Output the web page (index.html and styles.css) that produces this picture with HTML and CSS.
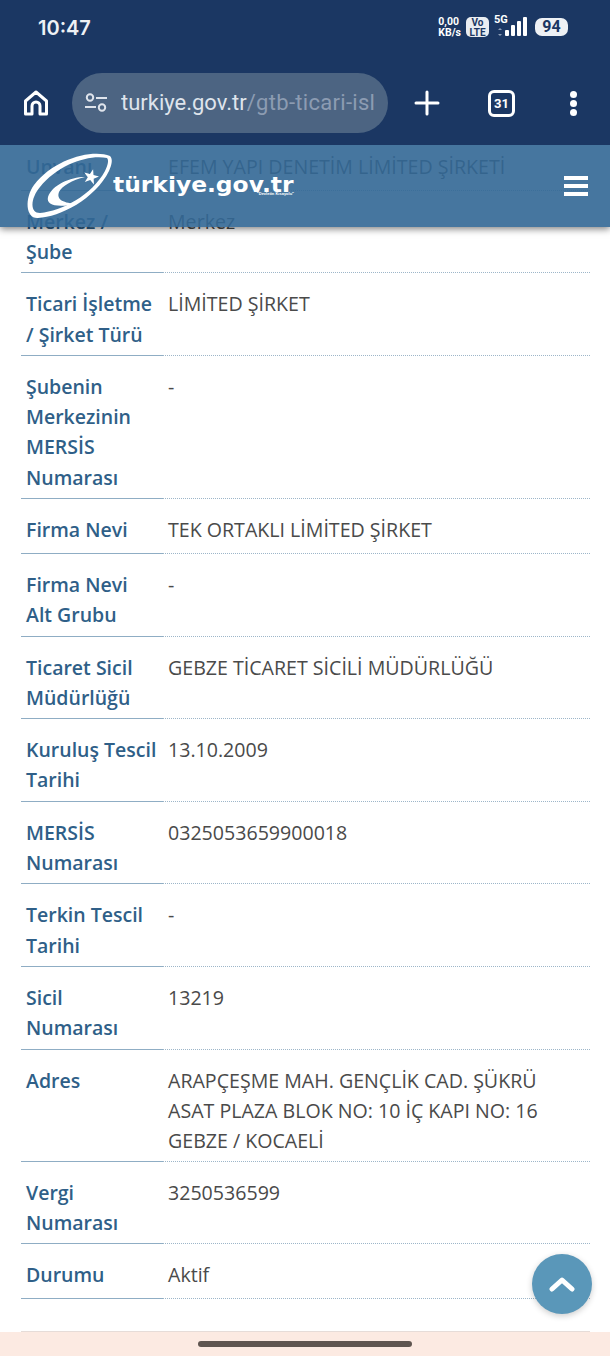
FILE: index.html
```html
<!DOCTYPE html>
<html lang="tr">
<head>
	<meta charset="utf-8">
	<title>türkiye.gov.tr</title>
	<link rel="stylesheet" href="styles.css">
</head>
<body>
<div class="screen">

	<div class="chrome">
		<div class="statusbar">
			<span class="clock">10:47</span>
			<div class="status-icons">
				<span class="netspeed">0,00<br>KB/s</span>
				<span class="volte">Vo<br>LTE</span>
				<div class="signal">
					<span class="five-g">5G</span>
					<svg width="32" height="22" viewBox="0 0 32 22">
						<path d="M4 12l2 2H2zM4 20l2-2H2z" fill="#8fa0b8"/>
						<rect x="9" y="14" width="4" height="6" rx="1" fill="#fff"/>
						<rect x="15" y="9" width="4" height="11" rx="1" fill="#fff"/>
						<rect x="21" y="5" width="4" height="15" rx="1" fill="#fff"/>
						<rect x="27" y="1" width="4" height="19" rx="1" fill="#fff"/>
					</svg>
				</div>
				<span class="battery">94</span>
			</div>
		</div>
		<div class="toolbar">
			<svg class="home-icon" width="26" height="28" viewBox="0 0 26 28" fill="none" stroke="#fff" stroke-width="3">
				<path d="M2.5 25V12L13 3l10.5 9v13H17v-8a4 4 0 0 0-8 0v8z" stroke-linejoin="round"/>
			</svg>
			<div class="urlbar">
				<svg class="tune-icon" width="24" height="20" viewBox="0 0 24 20" fill="none" stroke="#dfe4ec" stroke-width="2">
					<circle cx="6" cy="4.5" r="3.2"/>
					<path d="M12 5h11M1 14h11"/>
					<circle cx="18" cy="14.5" r="3.2"/>
				</svg>
				<span class="url"><span class="url-host">turkiye.gov.tr</span>/gtb-ticari-islem</span>
			</div>
			<svg class="plus-icon" width="26" height="26" viewBox="0 0 26 26" stroke="#fff" stroke-width="3" stroke-linecap="round">
				<path d="M13 2v22M2 13h22"/>
			</svg>
			<span class="tabs">31</span>
			<div class="kebab"><i></i><i></i><i></i></div>
		</div>
	</div>

	<header class="site-header">
		<div class="logo">
			<svg width="100" height="75" viewBox="0 0 100 75" fill="#fff">
				<path fill-rule="evenodd" d="M90 7C72 0 34 10 14 36 4 50 6 70 18 69 40 68 75 50 89 22 92 15 93 10 90 7zM87 9C70 5 38 15 20 38 10 50 10 64 20 64 42 62 72 46 85 22 88 16 89 11 87 9z"/>
				<path d="M65 28C50 28 32 36 28 48 26 56 36 59 57 55 44 54 36 51 39 43 42 37 52 31 65 28z"/>
				<path d="M73.1 20.3L73.5 26 79 27.6 73.7 29.7 73.9 35.5 70.2 31.1 64.8 33 67.8 28.2 64.3 23.6 69.9 25z"/>
			</svg>
			<div class="logo-text">
				<span class="logo-name">türkiye.gov.tr</span>
				<span class="logo-tag">"Devletin Kısayolu"</span>
			</div>
		</div>
		<div class="menu-btn"><i></i><i></i><i></i></div>
	</header>

	<main class="details">
		<div class="row one"><div class="lbl">Unvanı</div><div class="val">EFEM YAPI DENETİM LİMİTED ŞİRKETİ</div></div>
		<div class="row"><div class="lbl">Merkez / Şube</div><div class="val">Merkez</div></div>
		<div class="row"><div class="lbl">Ticari İşletme / Şirket Türü</div><div class="val">LİMİTED ŞİRKET</div></div>
		<div class="row"><div class="lbl">Şubenin Merkezinin MERSİS Numarası</div><div class="val">-</div></div>
		<div class="row one"><div class="lbl">Firma Nevi</div><div class="val">TEK ORTAKLI LİMİTED ŞİRKET</div></div>
		<div class="row"><div class="lbl">Firma Nevi Alt Grubu</div><div class="val">-</div></div>
		<div class="row"><div class="lbl">Ticaret Sicil Müdürlüğü</div><div class="val">GEBZE TİCARET SİCİLİ MÜDÜRLÜĞÜ</div></div>
		<div class="row"><div class="lbl">Kuruluş Tescil Tarihi</div><div class="val">13.10.2009</div></div>
		<div class="row"><div class="lbl">MERSİS Numarası</div><div class="val">0325053659900018</div></div>
		<div class="row"><div class="lbl">Terkin Tescil Tarihi</div><div class="val">-</div></div>
		<div class="row"><div class="lbl">Sicil Numarası</div><div class="val">13219</div></div>
		<div class="row"><div class="lbl">Adres</div><div class="val">ARAPÇEŞME MAH. GENÇLİK CAD. ŞÜKRÜ ASAT PLAZA BLOK NO: 10 İÇ KAPI NO: 16 GEBZE / KOCAELİ</div></div>
		<div class="row"><div class="lbl">Vergi Numarası</div><div class="val">3250536599</div></div>
		<div class="row one"><div class="lbl">Durumu</div><div class="val">Aktif</div></div>
		<div class="end-line"></div>
	</main>

	<button class="to-top" type="button">
		<svg width="26" height="16" viewBox="0 0 26 16" fill="none" stroke="#fff" stroke-width="5" stroke-linecap="round" stroke-linejoin="round">
			<path d="M3 13L13 4l10 9"/>
		</svg>
	</button>

	<div class="navbar"><span class="home-pill"></span></div>
</div>
</body>
</html>
```

FILE: styles.css
```css
* {
	box-sizing: border-box;
}

html, body {
	margin: 0;
	padding: 0;
}

body {
	background: #fff;
	font-family: "Open Sans", sans-serif;
}

.screen {
	position: relative;
	width: 610px;
	height: 1356px;
	overflow: hidden;
	display: flex;
	flex-direction: column;
}

/* browser chrome */
.chrome {
	position: relative;
	z-index: 3;
	flex: none;
	height: 145px;
	background: #1b3763;
	color: #fff;
	font-family: Roboto, sans-serif;
}

.statusbar {
	height: 73px;
	display: flex;
	align-items: flex-start;
	justify-content: space-between;
	padding: 16px 42px 0 38px;
}

.clock {
	font-family: Inter, sans-serif;
	font-size: 20px;
	line-height: 24px;
	font-weight: 600;
	color: #eef1f5;
}

.status-icons {
	display: flex;
	align-items: center;
	height: 24px;
	margin-top: -1px;
}

.netspeed {
	font-size: 10.5px;
	line-height: 11px;
	font-weight: 700;
	margin-right: 5px;
}

.volte {
	width: 23px;
	height: 20px;
	background: #e9edf2;
	border-radius: 5px;
	color: #1b3763;
	font-size: 10px;
	line-height: 9.5px;
	font-weight: 700;
	text-align: center;
	padding-top: 1px;
	margin-right: 3px;
}

.signal {
	position: relative;
	width: 36px;
	height: 22px;
	display: flex;
	justify-content: flex-end;
}

.five-g {
	position: absolute;
	left: 2px;
	top: -2px;
	font-size: 11px;
	line-height: 12px;
	font-weight: 700;
}

.battery {
	width: 33px;
	height: 18px;
	margin-left: 7px;
	background: #eef1f5;
	border-radius: 7px;
	color: #1b3763;
	font-size: 16px;
	line-height: 18px;
	font-weight: 700;
	text-align: center;
}

.toolbar {
	display: flex;
	align-items: center;
	height: 60px;
}

.home-icon {
	flex: none;
	margin: 0 23px 0 23px;
}

.urlbar {
	flex: none;
	width: 316px;
	height: 60px;
	border-radius: 30px;
	background: #4c6482;
	display: flex;
	align-items: center;
	padding: 0 12px 0 12px;
}

.tune-icon {
	flex: none;
	margin-right: 13px;
}

.url {
	font-size: 22px;
	line-height: 30px;
	color: #8c9cb2;
	letter-spacing: 0.3px;
	white-space: nowrap;
	overflow: hidden;
}

.url-host {
	color: #dfe4ec;
	letter-spacing: 0;
}

.plus-icon {
	flex: none;
	margin-left: 26px;
}

.tabs {
	flex: none;
	width: 27px;
	height: 27px;
	margin-left: 48px;
	border: 3px solid #fff;
	border-radius: 6px;
	font-size: 13px;
	line-height: 21px;
	font-weight: 700;
	text-align: center;
}

.kebab {
	flex: none;
	margin-left: 55px;
	display: flex;
	flex-direction: column;
	gap: 2px;
}

.kebab i {
	display: block;
	width: 7px;
	height: 7px;
	border-radius: 50%;
	background: #fff;
}

/* site header, sits on top of the list */
.site-header {
	position: absolute;
	z-index: 2;
	top: 145px;
	left: 0;
	width: 610px;
	height: 82px;
	background: rgba(50, 103, 149, 0.9);
	box-shadow: 0 2px 7px rgba(0, 0, 0, 0.5);
	display: flex;
	align-items: center;
	justify-content: space-between;
	padding: 0 22px 0 20px;
}

.logo {
	display: flex;
	align-items: flex-start;
}

.logo-text {
	width: 181px;
	display: flex;
	flex-direction: column;
	align-items: flex-end;
	margin: 25px 0 0 -7px;
	color: #fff;
}

.logo-name {
	align-self: flex-start;
	font-family: "DejaVu Sans", sans-serif;
	font-size: 21px;
	line-height: 22px;
	font-weight: 700;
	white-space: nowrap;
	transform: scaleX(1.113);
	transform-origin: left center;
}

.logo-tag {
	margin-top: -5px;
	font-family: "Liberation Sans", sans-serif;
	font-size: 4px;
	line-height: 6px;
	font-weight: 700;
}

.menu-btn {
	display: flex;
	flex-direction: column;
	gap: 4px;
}

.menu-btn i {
	display: block;
	width: 24px;
	height: 4px;
	background: #fff;
}

/* detail rows */
.details {
	flex: 1;
	min-height: 0;
	margin: -9.4px 20px 0 21px;
}

.row {
	display: grid;
	grid-template-columns: 142px 1fr;
}

.row.one {
	min-height: 55px;
}

.lbl {
	padding: 16px 6px 5px 5px;
	border-bottom: 1px solid #8fadc4;
	color: #2f5f88;
	font-size: 19.5px;
	line-height: 30.3px;
	font-weight: 600;
}

.val {
	padding: 16px 40px 5px 5px;
	border-bottom: 1px dotted #9db6c9;
	color: #4a4a4a;
	font-size: 19.6px;
	line-height: 30px;
}

.end-line {
	margin-top: 31.4px;
	height: 1px;
	background: #e6dcd8;
}

.to-top {
	position: absolute;
	z-index: 1;
	left: 532px;
	top: 1254px;
	width: 60px;
	height: 60px;
	border: 0;
	padding: 0;
	border-radius: 50%;
	background: #5a97b9;
	box-shadow: 0 2px 6px rgba(0, 0, 0, 0.2);
	display: flex;
	align-items: center;
	justify-content: center;
}

.navbar {
	flex: none;
	height: 24px;
	background: #fceae2;
	display: flex;
	justify-content: center;
	padding-top: 9px;
}

.home-pill {
	width: 214px;
	height: 6px;
	border-radius: 3px;
	background: #5f5550;
}
```
